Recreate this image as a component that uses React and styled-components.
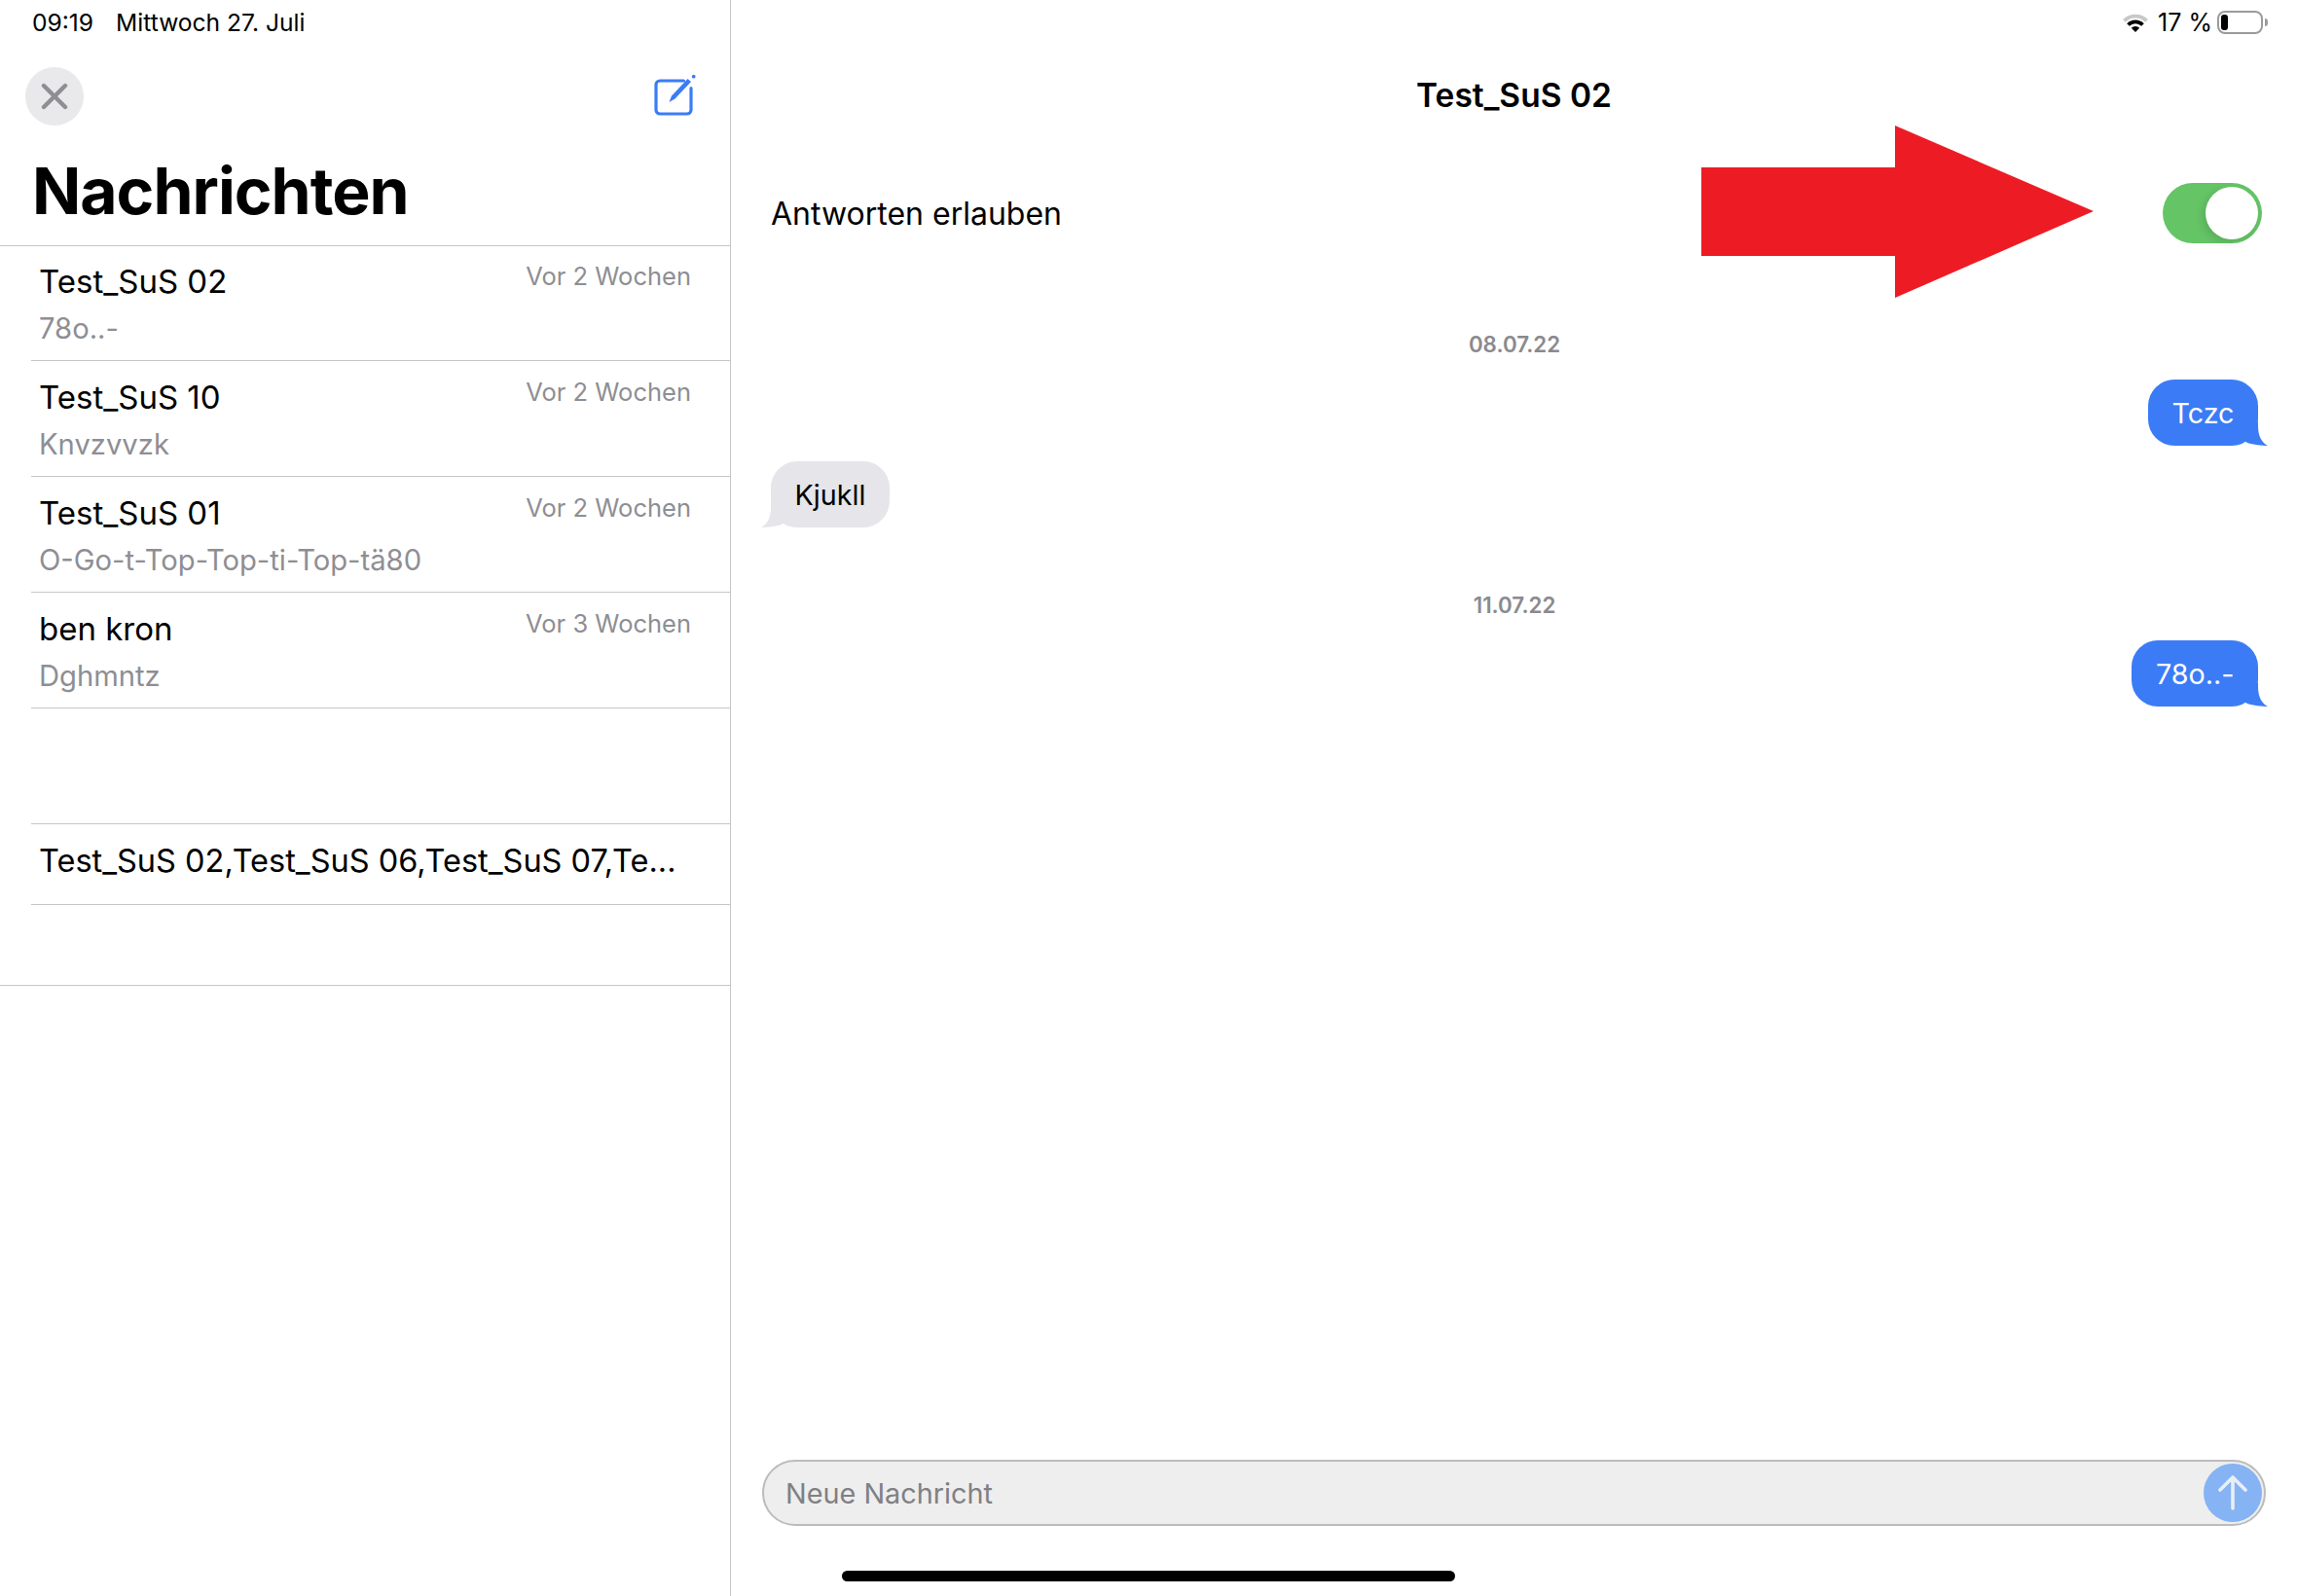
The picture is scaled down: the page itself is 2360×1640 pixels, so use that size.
import React from 'react'
import styled, { createGlobalStyle } from 'styled-components'

const BLUE = '#3b7cf6'
const LINE = '#c6c6c8'

const threads = [
  { name: 'Test_SuS 02', time: 'Vor 2 Wochen', preview: '78o..-' },
  { name: 'Test_SuS 10', time: 'Vor 2 Wochen', preview: 'Knvzvvzk' },
  { name: 'Test_SuS 01', time: 'Vor 2 Wochen', preview: 'O-Go-t-Top-Top-ti-Top-tä80' },
  { name: 'ben kron', time: 'Vor 3 Wochen', preview: 'Dghmntz' }
]

const GlobalStyle = createGlobalStyle`
  html, body {
    margin: 0;
    background: #fff;
  }
  body {
    font-family: Inter, "Liberation Sans", sans-serif;
    color: #000;
  }
`

const Tail = ({ color, flip }) => (
  <TailShape viewBox="0 0 24 24" $flip={flip}>
    <path d="M14 4C14 14 18 21 24 24C18 24 9 23 3 21L0 19V0H14Z" fill={color} />
  </TailShape>
)

export default function App() {
  return (
    <Screen>
      <GlobalStyle />
      <Sidebar>
        <SideStatus>
          <span>09:19</span>
          <span>Mittwoch 27. Juli</span>
        </SideStatus>
        <NavRow>
          <CloseButton>
            <svg width="28" height="28" viewBox="0 0 28 28" fill="none" stroke="#8e8e93" strokeWidth="4.4" strokeLinecap="round">
              <path d="M3 3L25 25M25 3L3 25" />
            </svg>
          </CloseButton>
          <ComposeIcon viewBox="10 14 46 46" fill="none" stroke={BLUE} strokeWidth="3.2">
            <path d="M41.5 22H17A4 4 0 0 0 13 26V52A4 4 0 0 0 17 56H45A4 4 0 0 0 49 52V29.5" strokeLinecap="round" />
            <path d="M26.5 44L29 37.5L45.5 20L49 23L32.5 40.5Z" fill={BLUE} stroke="none" />
            <circle cx="51.7" cy="17.7" r="1.9" fill={BLUE} stroke="none" />
          </ComposeIcon>
        </NavRow>
        <LargeTitle>Nachrichten</LargeTitle>
        <ThreadList>
          {threads.map(t => (
            <Thread key={t.name}>
              <ThreadName>{t.name}</ThreadName>
              <ThreadTime>{t.time}</ThreadTime>
              <ThreadPreview>{t.preview}</ThreadPreview>
            </Thread>
          ))}
          <EmptyRow />
          <GroupRow>Test_SuS 02,Test_SuS 06,Test_SuS 07,Te...</GroupRow>
          <ListEnd />
        </ThreadList>
      </Sidebar>

      <Main>
        <MainStatus>
          <svg width="30" height="20" viewBox="0 0 28 19" fill="none">
            <path d="M3 8A15.5 15.5 0 0 1 25 8" stroke="#c8c8c8" strokeWidth="3.6" />
            <path d="M6.9 11.9A10 10 0 0 1 21.1 11.9" stroke="#000" strokeWidth="3.6" />
            <path d="M14 19L10 15A5.6 5.6 0 0 1 18 15Z" fill="#000" />
          </svg>
          <StatusText>17 %</StatusText>
          <Battery>
            <BatteryFill />
          </Battery>
        </MainStatus>
        <ChatTitle>Test_SuS 02</ChatTitle>
        <ToggleRow>
          <span>Antworten erlauben</span>
          <Toggle>
            <Knob />
          </Toggle>
        </ToggleRow>
        <Messages>
          <DateLabel>08.07.22</DateLabel>
          <Bubble $mine>
            Tczc
            <Tail color={BLUE} />
          </Bubble>
          <Bubble>
            Kjukll
            <Tail color="#e5e5ea" flip />
          </Bubble>
          <DateLabel>11.07.22</DateLabel>
          <Bubble $mine>
            78o..-
            <Tail color={BLUE} />
          </Bubble>
        </Messages>
        <Composer>
          <Placeholder>Neue Nachricht</Placeholder>
          <SendButton>
            <svg width="32" height="38" viewBox="0 0 32 38" fill="none" stroke="#e9eef6" strokeWidth="3.6" strokeLinecap="round" strokeLinejoin="round">
              <path d="M16 35V3M3 16L16 3L29 16" />
            </svg>
          </SendButton>
        </Composer>
      </Main>
      <HomeBar />
      <RedArrow viewBox="0 0 403 177">
        <path d="M0 43H199V0L403 88L199 177V134H0Z" fill="#ed1c24" />
      </RedArrow>
    </Screen>
  )
}

const Screen = styled.div`
  position: relative;
  display: flex;
  width: 2360px;
  height: 1640px;
  overflow: hidden;
  background: #fff;
`

const Sidebar = styled.aside`
  width: 750px;
  flex: none;
  display: flex;
  flex-direction: column;
  border-right: 1px solid ${LINE};
`

const SideStatus = styled.div`
  height: 46px;
  display: flex;
  align-items: center;
  gap: 23px;
  padding-left: 33px;
  font-size: 24.6px;
`

const NavRow = styled.div`
  display: flex;
  align-items: center;
  justify-content: space-between;
  height: 60px;
  margin-top: 23px;
  padding: 0 33px 0 26px;
`

const CloseButton = styled.div`
  width: 60px;
  height: 60px;
  border-radius: 50%;
  background: #e9e9eb;
  display: flex;
  align-items: center;
  justify-content: center;
`

const ComposeIcon = styled.svg`
  width: 46px;
  height: 46px;
  margin-top: -3px;
`

const LargeTitle = styled.h1`
  height: 123px;
  margin: 0;
  padding-left: 33px;
  font-size: 66px;
  font-weight: 700;
  line-height: 134px;
  letter-spacing: -1px;
`

const ThreadList = styled.div`
  border-top: 1px solid ${LINE};
`

const Thread = styled.div`
  box-sizing: border-box;
  height: 119px;
  margin-left: 32px;
  padding: 17px 40px 0 8px;
  border-bottom: 1px solid ${LINE};
  display: grid;
  grid-template-columns: 1fr auto;
  grid-template-rows: 40px 40px;
  row-gap: 9px;

  &:first-child {
    height: 118px;
    padding-top: 16px;
  }
`

const ThreadName = styled.div`
  font-size: 33px;
  line-height: 40px;
`

const ThreadTime = styled.div`
  margin-top: -3px;
  font-size: 25.5px;
  line-height: 36px;
  color: #8e8e93;
`

const ThreadPreview = styled.div`
  grid-column: 1 / -1;
  font-size: 29.2px;
  line-height: 40px;
  color: #8e8e93;
`

const EmptyRow = styled.div`
  height: 119px;
  box-sizing: border-box;
  margin-left: 32px;
  border-bottom: 1px solid ${LINE};
`

const GroupRow = styled.div`
  box-sizing: border-box;
  height: 83px;
  margin-left: 32px;
  padding: 18px 0 0 8px;
  border-bottom: 1px solid ${LINE};
  font-size: 32.5px;
  line-height: 40px;
  white-space: nowrap;
`

const ListEnd = styled.div`
  height: 83px;
  box-sizing: border-box;
  border-bottom: 1px solid ${LINE};
`

const Main = styled.main`
  flex: 1;
  min-width: 0;
  display: flex;
  flex-direction: column;
`

const MainStatus = styled.div`
  height: 46px;
  display: flex;
  align-items: center;
  justify-content: flex-end;
  gap: 6px;
  padding-right: 35px;
  font-size: 25px;
`

const StatusText = styled.span`
  margin-left: 2px;
  margin-right: -1px;
`

const Battery = styled.div`
  position: relative;
  box-sizing: border-box;
  width: 47px;
  height: 24px;
  padding: 2px;
  border: 2px solid #9b9b9b;
  border-radius: 8px;

  &::after {
    content: '';
    position: absolute;
    right: -7px;
    top: 6px;
    width: 3px;
    height: 8px;
    border-radius: 0 4px 4px 0;
    background: #9b9b9b;
  }
`

const BatteryFill = styled.div`
  width: 7px;
  height: 100%;
  border-radius: 3px;
  background: #000;
`

const ChatTitle = styled.div`
  height: 103px;
  line-height: 105px;
  text-align: center;
  font-size: 33.5px;
  font-weight: 600;
`

const ToggleRow = styled.div`
  height: 140px;
  display: flex;
  align-items: center;
  justify-content: space-between;
  padding: 0 36px 0 41px;
  font-size: 32px;
`

const Toggle = styled.div`
  box-sizing: border-box;
  width: 102px;
  height: 62px;
  padding: 4px;
  border-radius: 31px;
  background: #65c466;
  display: flex;
  justify-content: flex-end;
`

const Knob = styled.div`
  width: 54px;
  height: 54px;
  border-radius: 50%;
  background: #fff;
  box-shadow: -3px 3px 8px rgba(0, 0, 0, 0.12);
`

const Messages = styled.div`
  flex: 1;
  display: flex;
  flex-direction: column;
  padding: 50px 40px 0 41px;
`

const DateLabel = styled.div`
  height: 30px;
  line-height: 30px;
  margin-bottom: 21px;
  text-align: center;
  font-size: 22.3px;
  font-weight: 600;
  color: #8a8a8e;

  & ~ & {
    margin-top: 49px;
  }
`

const Bubble = styled.div`
  position: relative;
  box-sizing: border-box;
  height: 68px;
  margin-bottom: 16px;
  padding: 0 24.5px;
  align-self: ${p => (p.$mine ? 'flex-end' : 'flex-start')};
  border-radius: 27px;
  background: ${p => (p.$mine ? BLUE : '#e5e5ea')};
  color: ${p => (p.$mine ? '#fff' : '#000')};
  font-size: 28.7px;
  line-height: 70px;

  svg {
    ${p => (p.$mine ? 'right: -10px;' : 'left: -10px;')}
  }
`

const TailShape = styled.svg`
  position: absolute;
  bottom: 0;
  width: 24px;
  height: 24px;
  transform: ${p => (p.$flip ? 'scaleX(-1)' : 'none')};
`

const Composer = styled.div`
  box-sizing: border-box;
  height: 68px;
  margin: 0 32px 72px 32px;
  padding: 0 2px 0 22px;
  display: flex;
  align-items: center;
  justify-content: space-between;
  border: 2px solid #bcbcbc;
  border-radius: 34px;
  background: #eeeeee;
`

const Placeholder = styled.span`
  font-size: 28.8px;
  color: #808084;
`

const SendButton = styled.div`
  width: 60px;
  height: 60px;
  border-radius: 50%;
  background: #86b3f3;
  display: flex;
  align-items: center;
  justify-content: center;
`

const HomeBar = styled.div`
  position: absolute;
  left: 865px;
  top: 1614px;
  width: 630px;
  height: 11px;
  border-radius: 6px;
  background: #000;
`

const RedArrow = styled.svg`
  position: absolute;
  left: 1748px;
  top: 129px;
  width: 403px;
  height: 177px;
`
